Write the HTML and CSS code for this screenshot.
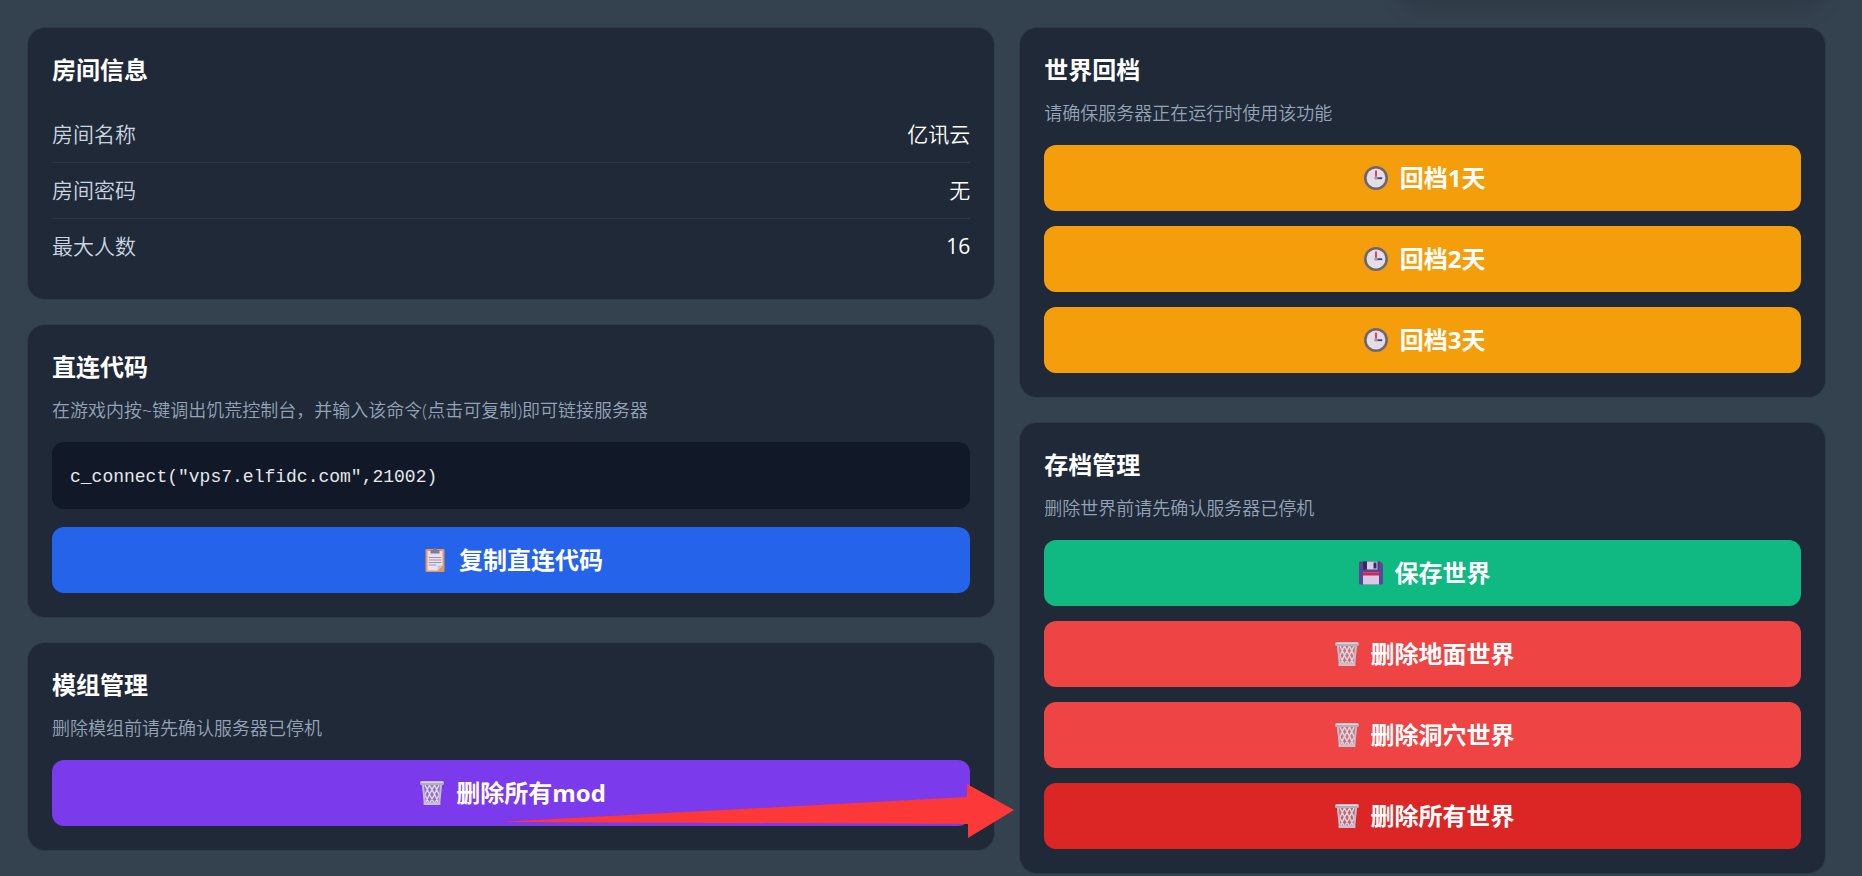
FILE: index.html
```html
<!DOCTYPE html>
<html lang="zh-CN">
<head>
    <meta charset="UTF-8">
    <title>房间信息</title>
    <link rel="stylesheet" href="styles.css">
</head>
<body>
<svg class="sprite" width="0" height="0" aria-hidden="true">
    <symbol id="i-clock" viewBox="0 0 24 24">
        <circle cx="12" cy="12" r="12" fill="#6d6573"/>
        <circle cx="12" cy="12" r="9.4" fill="#e3dde6"/>
        <path d="M12 4.5V12" stroke="#f0386b" stroke-width="2"/>
        <path d="M12 12.2h6.2" stroke="#433b6b" stroke-width="1.8"/>
        <circle cx="12" cy="12" r="1.8" fill="#a69ba9"/>
    </symbol>
    <symbol id="i-copy" viewBox="0 0 24 24">
        <rect x="2.5" y="1" width="19" height="23" rx="1" fill="#e0995f"/>
        <path d="M4.5 3h15v14.5l-4.8 5H4.5z" fill="#e9e0f0"/>
        <path d="M19.5 17.5l-4.8 5v-5z" fill="#cdbfda"/>
        <path d="M7.5 5.5V3q0-1 1-1h1.3q.4-2 2.2-2t2.2 2h1.3q1 0 1 1v2.5z" fill="#857b88"/>
        <path d="M5.8 9.5h12.4M5.8 12h12.4M5.8 14.5h12.4M5.8 17h7.5" stroke="#9d92aa" stroke-width="1"/>
    </symbol>
    <symbol id="i-trash" viewBox="0 0 24 24">
        <path d="M2 3.5h20l-2.2 20H4.2z" fill="#a9a1b0" fill-opacity=".5"/>
        <path d="M5 4l4.5 9-4 9M9.5 4l5 9.5-5 9M14.5 4l-5 9.5 5 9M19 4l-4.5 9 4 9M5 13.5L9.5 4M19 13.5L14.5 4M4.5 13.5l5 9M19.5 13.5l-5 9" fill="none" stroke="#ddd7e2" stroke-width="1.5"/>
        <path d="M2.8 3l2 19.5h14.4l2-19.5" fill="none" stroke="#c3bcc8" stroke-width="2"/>
        <rect x="0" y="0" width="24" height="4" rx="1.5" fill="#b5adba"/>
        <rect x="1" y=".5" width="22" height="1.5" rx=".6" fill="#d9d3dd"/>
        <rect x="3.5" y="21.5" width="17" height="2.5" rx="1" fill="#c9c2cd"/>
    </symbol>
    <symbol id="i-save" viewBox="0 0 24 24">
        <path d="M1.2.5h20.3L24 3v19.3q0 1.2-1.2 1.2H1.2q-1.2 0-1.2-1.2V1.7Q0 .5 1.2.5z" fill="#5a4695"/>
        <path d="M4 .5h15.5v8H4z" fill="#352a63"/>
        <path d="M8 .5h10.5v8H8z" fill="#d8cfe6"/>
        <rect x="14.5" y="1.5" width="3" height="6" fill="#352a63"/>
        <rect x="4" y="11.5" width="16" height="12" fill="#d8c9e8"/>
        <rect x="4" y="11.5" width="16" height="3" fill="#d82455"/>
    </symbol>
</svg>

<div class="toast"></div>

<main class="grid">
    <div class="col">
        <section class="card">
            <h2>房间信息</h2>
            <dl class="info">
                <div class="row"><dt>房间名称</dt><dd>亿讯云</dd></div>
                <div class="row"><dt>房间密码</dt><dd>无</dd></div>
                <div class="row"><dt>最大人数</dt><dd class="num">16</dd></div>
            </dl>
        </section>

        <section class="card">
            <h2>直连代码</h2>
            <p class="tip">在游戏内按~键调出饥荒控制台，并输入该命令(点击可复制)即可链接服务器</p>
            <code class="code">c_connect("vps7.elfidc.com",21002)</code>
            <div class="btns">
                <button type="button" class="btn blue"><svg><use href="#i-copy"/></svg>复制直连代码</button>
            </div>
        </section>

        <section class="card mods">
            <h2>模组管理</h2>
            <p class="tip">删除模组前请先确认服务器已停机</p>
            <div class="btns">
                <button type="button" class="btn purple"><svg><use href="#i-trash"/></svg>删除所有mod</button>
            </div>
            <svg class="arrow" viewBox="0 0 514 54"><path d="M0 38L467 13V0l47 26-46 28V40z" fill="#fc3838"/></svg>
        </section>
    </div>

    <div class="col">
        <section class="card">
            <h2>世界回档</h2>
            <p class="tip">请确保服务器正在运行时使用该功能</p>
            <div class="btns">
                <button type="button" class="btn orange"><svg><use href="#i-clock"/></svg>回档1天</button>
                <button type="button" class="btn orange"><svg><use href="#i-clock"/></svg>回档2天</button>
                <button type="button" class="btn orange"><svg><use href="#i-clock"/></svg>回档3天</button>
            </div>
        </section>

        <section class="card">
            <h2>存档管理</h2>
            <p class="tip">删除世界前请先确认服务器已停机</p>
            <div class="btns">
                <button type="button" class="btn green"><svg><use href="#i-save"/></svg>保存世界</button>
                <button type="button" class="btn red"><svg><use href="#i-trash"/></svg>删除地面世界</button>
                <button type="button" class="btn red"><svg><use href="#i-trash"/></svg>删除洞穴世界</button>
                <button type="button" class="btn darkred"><svg><use href="#i-trash"/></svg>删除所有世界</button>
            </div>
        </section>
    </div>
</main>
</body>
</html>
```
FILE: styles.css
```css
*{box-sizing: border-box;}
body,h2,p,dl,dt,dd{margin: 0;padding: 0;}
body{
    padding: 27px 36px 2px 27px;
    background: #34414e;
    color: #fff;
    font-family: "Open Sans", "Noto Sans CJK SC", sans-serif;
    overflow-x: hidden;
}
.sprite{position: absolute;}

/* notice panel sits above the visible area, only its shadow shows */
.toast{
    position: absolute;top: -60px;right: 44px;
    width: 412px;height: 50px;
    border-radius: 12px;
    box-shadow: 0 10px 30px rgba(0,0,0,.2);
}

.grid{
    position: relative;
    display: grid;
    grid-template-columns: 1.2fr 1fr;
    gap: 24px;
    align-items: start;
    max-width: 1800px;
    margin: 0 auto;
}
.col{display: flex;flex-direction: column;gap: 24px;}

.card{
    padding: 24px;
    border: 1px solid #2e3b48;
    border-radius: 18px;
    background: #1f2937;
}
.card h2{
    margin-bottom: 12px;
    font-size: 24px;line-height: 36px;font-weight: 700;
}
.tip{
    margin-bottom: 18px;
    font-size: 18px;line-height: 27px;font-weight: 350;
    color: #94a3b8;
}

.info{padding-top: 7px;}
.row{
    display: flex;justify-content: space-between;
    padding: 12px 0;
    border-bottom: 1px solid #2b3644;
    font-size: 21px;line-height: 31px;font-weight: 350;
}
.row:last-child{border-color: transparent;}
.row dt{color: #cbd5e1;}
.num{font-weight: 400;}

.code{
    display: block;
    margin-bottom: 18px;
    padding: 20px 18px 16px;
    border-radius: 12px;
    background: #111827;
    color: #e5e7eb;
    font-family: "Liberation Mono", monospace;
    font-size: 18px;line-height: 31px;
}

.btns{display: flex;flex-direction: column;gap: 15px;}
.btn{
    display: flex;align-items: center;justify-content: center;
    gap: 8px;
    width: 100%;
    padding: 15px;
    border: 0;
    border-radius: 12px;
    color: #fff;
    font-family: inherit;
    font-size: 24px;line-height: 36px;font-weight: 700;
    cursor: pointer;
}
.btn svg{width: 24px;height: 24px;margin: 0 4px;}
.blue{background: #2563eb;}
.purple{background: #7c3aed;}
.orange{background: #f59e0b;}
.green{background: #10b981;}
.red{background: #ef4444;}
.darkred{background: #dc2626;}

/* arrow pointing at the save management card */
.mods{position: relative;}
.arrow{
    position: absolute;right: -20px;bottom: 12px;
    width: 514px;height: 54px;
    z-index: 1;
    pointer-events: none;
}
```
